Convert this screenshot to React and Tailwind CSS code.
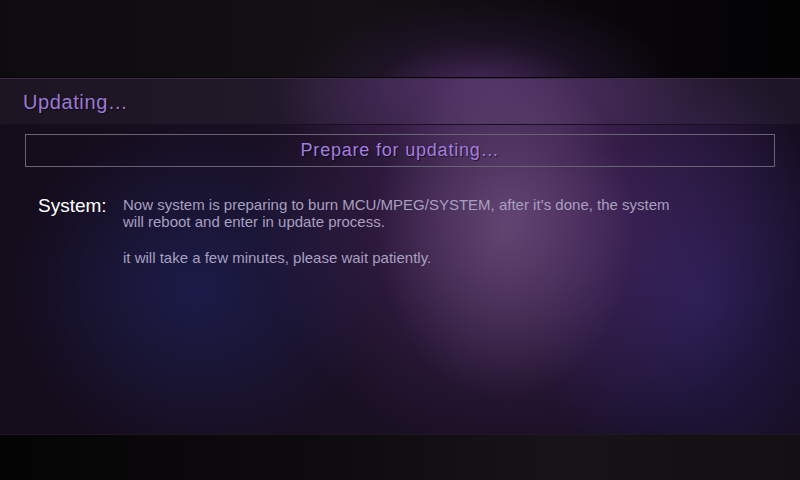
export default function App() {
  return (
    <div className="flex h-[480px] w-[800px] flex-col overflow-hidden bg-[#130b1b] font-['Liberation_Sans',Arial,sans-serif]">
      {/* top bar */}
      <div className="h-[78px] shrink-0 border-b border-[#09050b] bg-[#0c0a0c] bg-[image:radial-gradient(ellipse_200px_100px_at_480px_95px,rgba(82,46,104,0.95),rgba(40,24,55,0.5)_55%,transparent),linear-gradient(to_right,#0e0c0e,#141014_45%,#0a070c_75%,#030203)]" />

      {/* main panel */}
      <div className="flex flex-1 flex-col bg-[image:radial-gradient(ellipse_130px_170px_at_505px_150px,rgba(112,84,126,0.7),transparent),radial-gradient(ellipse_280px_250px_at_530px_130px,rgba(92,48,118,0.65),transparent),radial-gradient(ellipse_190px_170px_at_195px_210px,rgba(28,30,80,0.85),transparent),radial-gradient(ellipse_170px_220px_at_700px_220px,rgba(42,34,100,0.7),transparent),radial-gradient(ellipse_220px_90px_at_480px_0px,rgba(78,46,102,0.8),transparent),linear-gradient(to_right,#140c1a,#1a1024_50%,#150c1e)]">
        <div className="flex h-[47px] items-center border-t border-[#3a2c48] border-b border-b-[#1a0f22] bg-white/[0.04] pl-[23px]">
          <span className="text-[20px] tracking-[0.6px] text-[#9a7ad8] [text-shadow:1px_1px_1px_rgba(0,0,0,0.6)]">
            Updating…
          </span>
        </div>

        <div className="px-[25px] pt-[9px]">
          <div className="flex h-[33px] items-center justify-center border border-[#6a6276]">
            <span className="text-[18px] tracking-[0.8px] text-[#a27ee0] [text-shadow:1px_1px_1px_rgba(0,0,0,0.6)]">
              Prepare for updating…
            </span>
          </div>
        </div>

        <div className="flex pl-[38px] pt-[28px]">
          <div className="w-[85px] text-[19px] leading-[22px] text-white">System:</div>
          <div className="pt-[1px] text-[15px] leading-[17px] text-[#a99fc0]">
            <p>
              Now system is preparing to burn MCU/MPEG/SYSTEM, after it’s done, the system
              <br />
              will reboot and enter in update process.
            </p>
            <p className="mt-[19px]">it will take a few minutes, please wait patiently.</p>
          </div>
        </div>
      </div>

      {/* bottom bar */}
      <div className="h-[46px] shrink-0 border-t border-[#1e1624] bg-[image:linear-gradient(to_right,#050405,#0e0b0e_40%,#171319_70%,#121012)]" />
    </div>
  );
}
